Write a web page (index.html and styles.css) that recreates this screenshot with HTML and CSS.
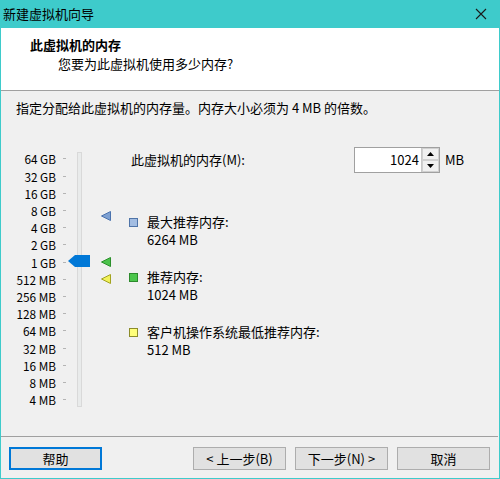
FILE: index.html
```html
<!DOCTYPE html>
<html lang="zh-CN">
<head>
<meta charset="utf-8">
<title>新建虚拟机向导</title>
<link rel="stylesheet" href="styles.css">
</head>
<body>
<div class="window">
  <div class="titlebar">
    <span class="title">新建虚拟机向导</span>
    <svg class="close" width="12" height="12" viewBox="0 0 12 12"><path d="M1 1 L11 11 M11 1 L1 11" stroke="#1a1a1a" stroke-width="1.1" fill="none"/></svg>
  </div>
  <div class="header">
    <div class="h-title">此虚拟机的内存</div>
    <div class="h-sub">您要为此虚拟机使用多少内存?</div>
  </div>
  <div class="body">
    <div class="intro">指定分配给此虚拟机的内存量。内存大小必须为 4 MB 的倍数。</div>
    <div class="main">
      <div class="slider">
        <div class="scale">
          <div class="row"><span class="lbl">64 GB</span><span class="tick"></span></div>
          <div class="row"><span class="lbl">32 GB</span><span class="tick"></span></div>
          <div class="row"><span class="lbl">16 GB</span><span class="tick"></span></div>
          <div class="row"><span class="lbl">8 GB</span><span class="tick"></span></div>
          <div class="row"><span class="lbl">4 GB</span><span class="tick"></span></div>
          <div class="row"><span class="lbl">2 GB</span><span class="tick"></span></div>
          <div class="row"><span class="lbl">1 GB</span><span class="tick"></span></div>
          <div class="row"><span class="lbl">512 MB</span><span class="tick"></span></div>
          <div class="row"><span class="lbl">256 MB</span><span class="tick"></span></div>
          <div class="row"><span class="lbl">128 MB</span><span class="tick"></span></div>
          <div class="row"><span class="lbl">64 MB</span><span class="tick"></span></div>
          <div class="row"><span class="lbl">32 MB</span><span class="tick"></span></div>
          <div class="row"><span class="lbl">16 MB</span><span class="tick"></span></div>
          <div class="row"><span class="lbl">8 MB</span><span class="tick"></span></div>
          <div class="row"><span class="lbl">4 MB</span><span class="tick"></span></div>
        </div>
        <div class="track"></div>
        <svg class="thumb" width="22" height="12" viewBox="0 0 22 12"><polygon points="0,6 7,0 22,0 22,12 7,12" fill="#0078d7"/></svg>
        <svg class="mark mark-max" width="10" height="10" viewBox="0 0 10 10"><polygon points="0.5,5 9.5,0.5 9.5,9.5" fill="#7da0d2" stroke="#4a72ad" stroke-width="1"/></svg>
        <svg class="mark mark-rec" width="10" height="10" viewBox="0 0 10 10"><polygon points="0.5,5 9.5,0.5 9.5,9.5" fill="#4cc34c" stroke="#2b8f2b" stroke-width="1"/></svg>
        <svg class="mark mark-min" width="10" height="10" viewBox="0 0 10 10"><polygon points="0.5,5 9.5,0.5 9.5,9.5" fill="#f2f25a" stroke="#a3a320" stroke-width="1"/></svg>
      </div>
      <div class="panel">
        <div class="mem-row">
          <span class="mem-label">此虚拟机的内存(M):</span>
          <div class="spin-group">
            <div class="spin">
              <div class="spin-input">1024</div>
              <div class="spin-btns">
                <div class="spin-btn"><svg width="7" height="4" viewBox="0 0 7 4"><polygon points="0,4 3.5,0 7,4" fill="#000"/></svg></div>
                <div class="spin-btn"><svg width="7" height="4" viewBox="0 0 7 4"><polygon points="0,0 7,0 3.5,4" fill="#000"/></svg></div>
              </div>
            </div>
            <span class="unit">MB</span>
          </div>
        </div>
        <div class="info">
          <span class="sq sq-max"></span>
          <div class="info-text"><div>最大推荐内存:</div><div>6264 MB</div></div>
        </div>
        <div class="info">
          <span class="sq sq-rec"></span>
          <div class="info-text"><div>推荐内存:</div><div>1024 MB</div></div>
        </div>
        <div class="info">
          <span class="sq sq-min"></span>
          <div class="info-text"><div>客户机操作系统最低推荐内存:</div><div>512 MB</div></div>
        </div>
      </div>
    </div>
  </div>
  <div class="separator"></div>
  <div class="footer">
    <button class="btn btn-focus">帮助</button>
    <div class="btn-group">
      <button class="btn">&lt; 上一步(B)</button>
      <button class="btn">下一步(N) &gt;</button>
      <button class="btn">取消</button>
    </div>
  </div>
</div>
</body>
</html>
```
FILE: styles.css
```css
* { box-sizing: border-box; }
html, body { margin: 0; padding: 0; }
body {
  width: 500px;
  height: 479px;
  font-family: "Noto Sans CJK SC", "Noto Sans", sans-serif;
  font-size: 13px;
  color: #000;
  background: #f0f0f0;
}
.window {
  width: 500px;
  height: 479px;
  border-left: 1px solid #3ecbcb;
  border-right: 1px solid #3ecbcb;
  border-bottom: 1px solid #3ecbcb;
  display: flex;
  flex-direction: column;
  background: #f0f0f0;
}
.titlebar {
  height: 28px;
  margin: 0 -1px;
  background: #3ecbcb;
  display: flex;
  align-items: center;
  justify-content: space-between;
  padding: 0 13px 0 3px;
  flex: none;
}
.title { font-size: 13px; line-height: 18px; }
.close { display: block; }
.header {
  height: 63px;
  flex: none;
  background: #fff;
  border-bottom: 1px solid #a0a0a0;
  padding: 8px 0 0 29px;
}
.h-title { font-weight: bold; line-height: 18px; }
.h-sub { line-height: 18px; margin: 1px 0 0 28px; }
.body {
  flex: 1;
  padding: 8px 0 0 15px;
}
.intro { line-height: 18px; }
.main {
  display: flex;
  margin: 30px 0 0 -15px;
}
.slider {
  position: relative;
  width: 112px;
  height: 262px;
  display: flex;
  flex: none;
}
.scale {
  padding-top: 3.4px;
  width: 66px;
  flex: none;
}
.row {
  height: 17.2px;
  display: flex;
  align-items: center;
}
.lbl {
  width: 55px;
  text-align: right;
  line-height: 15px;
  font-size: 11.8px;
  white-space: nowrap;
}
.tick {
  width: 3px;
  height: 1px;
  margin-left: 7px;
  background: #b4b4b4;
}
.track {
  margin: 5px 0 0 10px;
  width: 5px;
  height: 255px;
  background: #e9ebeb;
  border: 1px solid #d9d9d9;
}
.thumb { position: absolute; left: 67px; top: 108px; }
.mark { position: absolute; left: 100px; }
.mark-max { top: 64px; }
.mark-rec { top: 110px; }
.mark-min { top: 127px; }
.panel {
  margin-left: 16px;
  width: 335px;
  flex: none;
}
.mem-row {
  display: flex;
  align-items: center;
  padding-left: 2px;
  height: 26px;
}
.mem-label { line-height: 18px; }
.spin-group {
  margin-left: auto;
  display: flex;
  align-items: center;
}
.spin {
  display: flex;
  height: 26px;
  border: 1px solid #a0a0a0;
  background: #fff;
}
.spin-input {
  width: 66px;
  text-align: right;
  padding-right: 2px;
  line-height: 24px;
}
.spin-btns {
  width: 18px;
  display: flex;
  flex-direction: column;
  border-left: 1px solid #c8c8c8;
}
.spin-btn {
  flex: 1;
  display: flex;
  align-items: center;
  justify-content: center;
  background: #f0f0f0;
  border: 1px solid #d0d0d0;
}
.spin-btn svg { display: block; }
.unit { margin-left: 5px; line-height: 18px; }
.info {
  display: flex;
  align-items: flex-start;
  margin-top: 19px;
}
.mem-row + .info { margin-top: 40px; }
.info-text { line-height: 18px; margin-left: 9px; }
.sq {
  width: 9px;
  height: 9px;
  margin-top: 5px;
  border: 1px solid;
  flex: none;
}
.sq-max { background: #a3bde2; border-color: #4f74a8; }
.sq-rec { background: #4cc64c; border-color: #2d8a2d; }
.sq-min { background: #ffff7a; border-color: #8c8c2a; }
.separator {
  height: 1px;
  flex: none;
  background: #a0a0a0;
  margin-right: 1px;
}
.footer {
  height: 41px;
  flex: none;
  display: flex;
  align-items: flex-start;
  justify-content: space-between;
  padding: 10px 9px 0 8px;
}
.btn-group { display: flex; gap: 9px; }
.btn {
  width: 93px;
  height: 23px;
  margin: 0;
  padding: 0;
  font-family: inherit;
  font-size: 13px;
  color: #000;
  background: #e1e1e1;
  border: 1px solid #adadad;
  border-radius: 0;
  line-height: 20px;
}
.btn-focus { border: 2px solid #0078d7; }
```
